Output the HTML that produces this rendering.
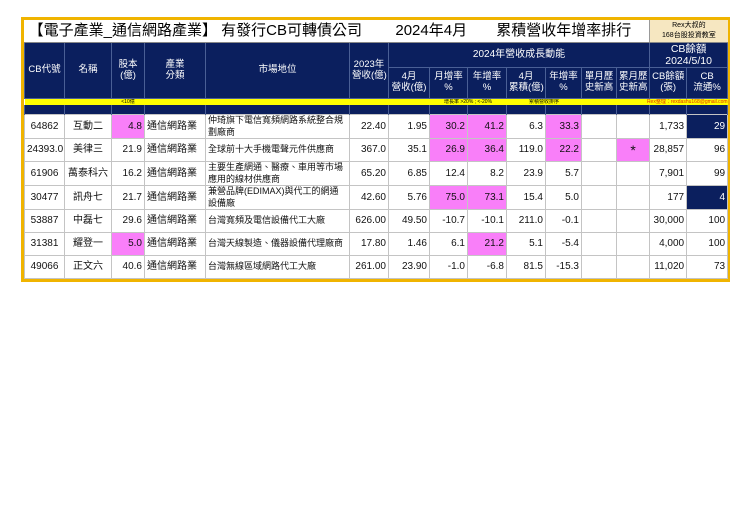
<!DOCTYPE html>
<html><head><meta charset="utf-8"><style>
body{margin:0;width:740px;height:523px;background:#fff;overflow:hidden;font-family:"Liberation Sans","Noto Sans CJK TC",sans-serif;}
#w{position:absolute;left:21px;top:17px;border:3px solid #f0b400;width:703px;}
table{border-collapse:collapse;table-layout:fixed;width:703px;}
td{padding:0 2px;overflow:hidden;white-space:nowrap;line-height:1.15;}
.h td{background:#0b1f5e;color:#fff;font-size:9.5px;text-align:center;border:1px solid #4a5f95;}
.d td{border:1px solid #c4c4c4;font-size:10px;color:#111;text-align:right;height:22px;padding-top:0;padding-bottom:0}
.d td.c{text-align:center}.d td.l{text-align:left;white-space:normal;font-size:9px;line-height:11.5px}
.d td.g{text-align:left;font-size:10px}
.p{background:#f97ff9}.n{background:#0b1f5e;color:#fff!important}
.t td{font-size:15px;height:22px;padding:0;border-bottom:1px solid #888;}
.s td{background:#ffff00;height:6px;font-size:5px;line-height:6px;padding:0;border-top:1px solid #0b1f5e;}
.nv td{background:#0b1f5e;height:9px;padding:0;border-left:1px solid #4a5f95;border-right:1px solid #4a5f95}
</style></head><body><div id="w"><table>
<colgroup><col style="width:40px"><col style="width:47px"><col style="width:33px"><col style="width:61px"><col style="width:144px"><col style="width:39px"><col style="width:41px"><col style="width:38px"><col style="width:39px"><col style="width:39px"><col style="width:36px"><col style="width:35px"><col style="width:33px"><col style="width:37px"><col style="width:41px"></colgroup>
<tr class="t"><td colspan="13" style="white-space:pre"> 【電子產業_通信網路產業】 有發行CB可轉債公司        2024年4月       累積營收年增率排行</td><td colspan="2" style="background:#f6e7c1;font-size:7px;text-align:center;line-height:10px;border-left:1px solid #999">Rex大叔的<br>168台股投資教室</td></tr>
<tr class="h"><td rowspan="2" style="height:50px">CB代號</td><td rowspan="2">名稱</td><td rowspan="2">股本<br>(億)</td><td rowspan="2">產業<br>分類</td><td rowspan="2">市場地位</td><td rowspan="2">2023年<br>營收(億)</td><td colspan="7" style="height:19px;font-size:10px">2024年營收成長動能</td><td colspan="2" style="font-size:10.5px">CB餘額<br>2024/5/10</td></tr>
<tr class="h"><td style="height:30px">4月<br>營收(億)</td><td>月增率<br>%</td><td>年增率<br>%</td><td>4月<br>累積(億)</td><td>年增率<br>%</td><td>單月歷<br>史新高</td><td>累月歷<br>史新高</td><td>CB餘額<br>(張)</td><td>CB<br>流通%</td></tr>
<tr class="s"><td></td><td></td><td style="text-align:center">&lt;10億</td><td colspan="4"></td><td colspan="2" style="text-align:center">增長率 &gt;20% ; &lt;-20%</td><td colspan="2" style="text-align:center">累積營收排序</td><td></td><td colspan="3" style="color:#e03000;text-align:right">Rex整理：rexdashu168@gmail.com</td></tr>
<tr class="nv"><td></td><td></td><td></td><td></td><td></td><td></td><td></td><td></td><td></td><td></td><td></td><td></td><td></td><td></td><td></td></tr>
<tr class="d"><td class="c">64862</td><td class="c">互動二</td><td class="p">4.8</td><td class="g">通信網路業</td><td class="l">仲琦旗下電信寬頻網路系統整合規劃廠商</td><td>22.40</td><td>1.95</td><td class="p">30.2</td><td class="p">41.2</td><td>6.3</td><td class="p">33.3</td><td></td><td></td><td>1,733</td><td class="n">29</td></tr>
<tr class="d"><td class="c">24393.0</td><td class="c">美律三</td><td>21.9</td><td class="g">通信網路業</td><td class="l">全球前十大手機電聲元件供應商</td><td>367.0</td><td>35.1</td><td class="p">26.9</td><td class="p">36.4</td><td>119.0</td><td class="p">22.2</td><td></td><td class="p c" style="font-size:14px">*</td><td>28,857</td><td>96</td></tr>
<tr class="d"><td class="c">61906</td><td class="c">萬泰科六</td><td>16.2</td><td class="g">通信網路業</td><td class="l">主要生產網通、醫療、車用等市場應用的線材供應商</td><td>65.20</td><td>6.85</td><td>12.4</td><td>8.2</td><td>23.9</td><td>5.7</td><td></td><td></td><td>7,901</td><td>99</td></tr>
<tr class="d"><td class="c">30477</td><td class="c">訊舟七</td><td>21.7</td><td class="g">通信網路業</td><td class="l">兼營品牌(EDIMAX)與代工的網通設備廠</td><td>42.60</td><td>5.76</td><td class="p">75.0</td><td class="p">73.1</td><td>15.4</td><td>5.0</td><td></td><td></td><td>177</td><td class="n">4</td></tr>
<tr class="d"><td class="c">53887</td><td class="c">中磊七</td><td>29.6</td><td class="g">通信網路業</td><td class="l">台灣寬頻及電信設備代工大廠</td><td>626.00</td><td>49.50</td><td>-10.7</td><td>-10.1</td><td>211.0</td><td>-0.1</td><td></td><td></td><td>30,000</td><td>100</td></tr>
<tr class="d"><td class="c">31381</td><td class="c">耀登一</td><td class="p">5.0</td><td class="g">通信網路業</td><td class="l">台灣天線製造、儀器設備代理廠商</td><td>17.80</td><td>1.46</td><td>6.1</td><td class="p">21.2</td><td>5.1</td><td>-5.4</td><td></td><td></td><td>4,000</td><td>100</td></tr>
<tr class="d"><td class="c">49066</td><td class="c">正文六</td><td>40.6</td><td class="g">通信網路業</td><td class="l">台灣無線區域網路代工大廠</td><td>261.00</td><td>23.90</td><td>-1.0</td><td>-6.8</td><td>81.5</td><td>-15.3</td><td></td><td></td><td>11,020</td><td>73</td></tr>
</table></div></body></html>
